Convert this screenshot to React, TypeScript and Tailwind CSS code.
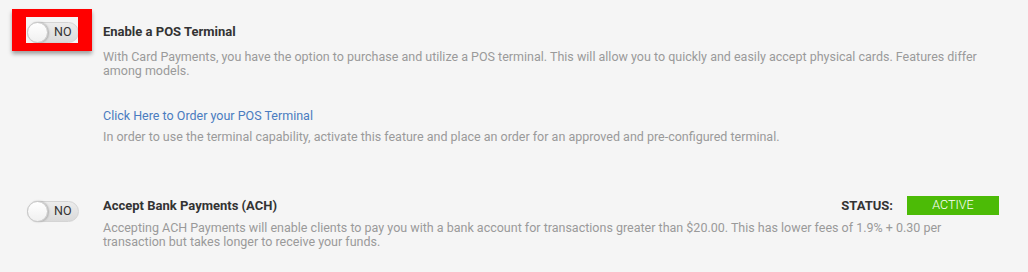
import React from 'react';

function Toggle() {
  return (
    <div className="relative flex h-[21px] w-[52px] shrink-0 items-center rounded-full border border-[#d4d4d4] bg-gradient-to-b from-[#ececec] to-[#dadada]">
      <div className="absolute left-[-1px] top-[-1px] h-[21px] w-[21px] rounded-full border border-[#c8c8c8] bg-gradient-to-b from-white to-[#f0f0f0] shadow-[1px_0_2px_rgba(0,0,0,0.25)]" />
      <span className="ml-[26px] text-[12.5px] leading-none text-[#333]">NO</span>
    </div>
  );
}

export default function App() {
  return (
    <div className="relative h-[272px] w-full overflow-hidden bg-[#f5f5f5] font-['Roboto',sans-serif]">
      {/* POS terminal */}
      <div className="flex pl-[27px] pt-[22px]">
        <Toggle />
        <div className="ml-[24px]">
          <h2 className="mt-[2px] text-[13px] font-bold leading-[16px] text-[#333]">
            Enable a POS Terminal
          </h2>
          <p className="mt-[10px] w-[895px] text-[12.5px] leading-[14px] text-[#9a9a9a]">
            With Card Payments, you have the option to purchase and utilize a POS terminal. This will allow you to quickly and easily accept physical cards. Features differ among models.
          </p>
          <a href="#" className="mt-[31px] block text-[12.5px] leading-[14px] text-[#4a7cc0]">
            Click Here to Order your POS Terminal
          </a>
          <p className="mt-[7px] text-[12.5px] leading-[14px] text-[#9a9a9a]">
            In order to use the terminal capability, activate this feature and place an order for an approved and pre-configured terminal.
          </p>
        </div>
      </div>

      {/* ACH */}
      <div className="mt-[52px] flex pl-[27px]">
        <div className="mt-[5px]">
          <Toggle />
        </div>
        <div className="ml-[24px] flex-1 pr-[29px]">
          <div className="flex h-[19px] items-center justify-between">
            <h2 className="text-[13px] font-bold leading-[16px] text-[#333]">
              Accept Bank Payments (ACH)
            </h2>
            <div className="flex items-center">
              <span className="text-[13px] font-bold text-[#333]">STATUS:</span>
              <span className="ml-[14px] flex h-[19px] w-[92px] items-center justify-center bg-[#4cbb06] text-[12.5px] font-light text-white">
                ACTIVE
              </span>
            </div>
          </div>
          <p className="mt-[6px] w-[850px] text-[12.5px] leading-[14px] text-[#9a9a9a]">
            Accepting ACH Payments will enable clients to pay you with a bank account for transactions greater than $20.00. This has lower fees of 1.9% + 0.30 per transaction but takes longer to receive your funds.
          </p>
        </div>
      </div>

      {/* highlight annotation */}
      <div className="absolute left-[12px] top-[9px] h-[42px] w-[80px] border-x-[14px] border-y-[8px] border-[#ff0000] shadow-[0_3px_4px_rgba(0,0,0,0.35)]" />
    </div>
  );
}
